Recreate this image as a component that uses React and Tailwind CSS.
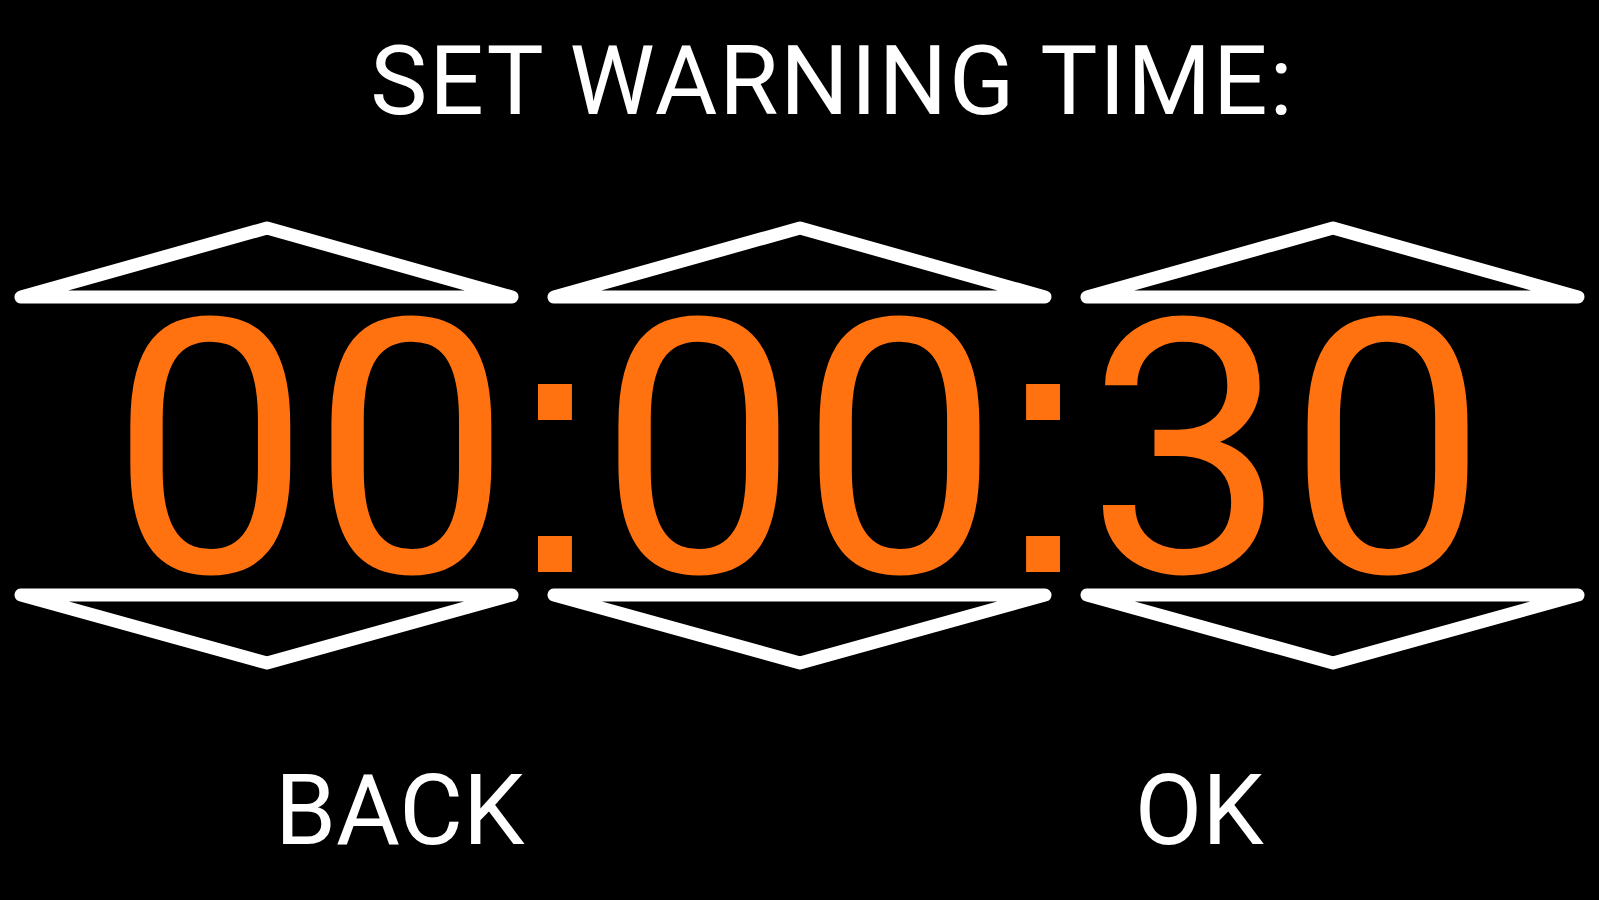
const ROBOTO = { fontFamily: 'Roboto, "Noto Sans", sans-serif' };

function Arrow({ down = false }) {
  // outline triangle used as the up/down stepper for each time field
  const points = down ? '21,11 512,11 267,79' : '21,82 512,82 267,13';
  return (
    <div className="flex justify-center">
      <svg width="533" height="95" viewBox="0 0 533 95" className="block">
        <polygon
          points={points}
          fill="none"
          stroke="#ffffff"
          strokeWidth="13"
          strokeLinejoin="round"
        />
      </svg>
    </div>
  );
}

function ArrowRow({ down }) {
  return (
    <div className="grid grid-cols-3">
      <Arrow down={down} />
      <Arrow down={down} />
      <Arrow down={down} />
    </div>
  );
}

function Colon() {
  return <span className="font-['Liberation_Sans'] mx-[-7px]">:</span>;
}

export default function App() {
  return (
    <div className="w-[1599px] h-[900px] bg-black text-white overflow-hidden flex flex-col" style={ROBOTO}>
      {/* Title */}
      <div className="h-[215px] pt-[33px] pl-[66px] flex justify-center">
        <h1 className="text-[96px] leading-[96px] font-normal tracking-[1.9px] text-white">SET WARNING TIME:</h1>
      </div>

      {/* Time picker */}
      <ArrowRow />
      <div className="h-[274px] pt-[2px] flex justify-center">
        <span className="text-[356px] leading-[274px] tracking-[1px] text-[#ff720f] whitespace-nowrap">
          00<Colon />00<Colon />30
        </span>
      </div>
      <ArrowRow down />

      {/* Buttons */}
      <div className="grid grid-cols-2 pt-[83px]">
        <button className="text-[98px] leading-[98px] text-white">BACK</button>
        <button className="text-[98px] leading-[98px] text-white">OK</button>
      </div>
    </div>
  );
}
